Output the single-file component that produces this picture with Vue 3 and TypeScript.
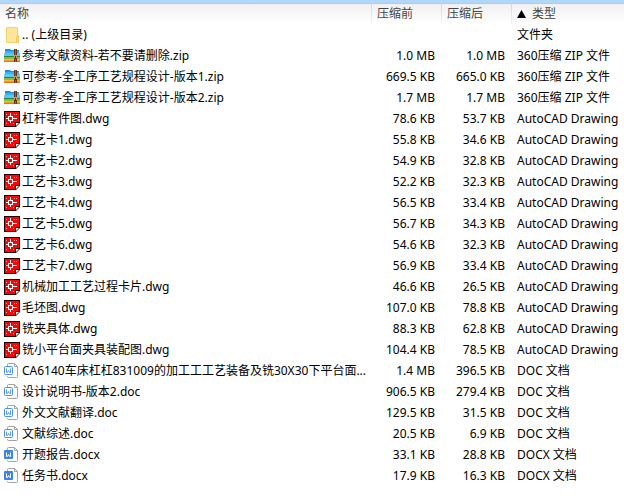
<script setup lang="ts">
type Kind = 'folder' | 'zip' | 'dwg' | 'doc' | 'docx'

interface Entry {
  kind: Kind
  name: string
  before: string
  after: string
}

const typeNames: Record<Kind, string> = {
  folder: '文件夹',
  zip: '360压缩 ZIP 文件',
  dwg: 'AutoCAD Drawing',
  doc: 'DOC 文档',
  docx: 'DOCX 文档',
}

const entries: Entry[] = [
  { kind: 'folder', name: '.. (上级目录)', before: '', after: '' },
  { kind: 'zip', name: '参考文献资料-若不要请删除.zip', before: '1.0 MB', after: '1.0 MB' },
  { kind: 'zip', name: '可参考-全工序工艺规程设计-版本1.zip', before: '669.5 KB', after: '665.0 KB' },
  { kind: 'zip', name: '可参考-全工序工艺规程设计-版本2.zip', before: '1.7 MB', after: '1.7 MB' },
  { kind: 'dwg', name: '杠杆零件图.dwg', before: '78.6 KB', after: '53.7 KB' },
  { kind: 'dwg', name: '工艺卡1.dwg', before: '55.8 KB', after: '34.6 KB' },
  { kind: 'dwg', name: '工艺卡2.dwg', before: '54.9 KB', after: '32.8 KB' },
  { kind: 'dwg', name: '工艺卡3.dwg', before: '52.2 KB', after: '32.3 KB' },
  { kind: 'dwg', name: '工艺卡4.dwg', before: '56.5 KB', after: '33.4 KB' },
  { kind: 'dwg', name: '工艺卡5.dwg', before: '56.7 KB', after: '34.3 KB' },
  { kind: 'dwg', name: '工艺卡6.dwg', before: '54.6 KB', after: '32.3 KB' },
  { kind: 'dwg', name: '工艺卡7.dwg', before: '56.9 KB', after: '33.4 KB' },
  { kind: 'dwg', name: '机械加工工艺过程卡片.dwg', before: '46.6 KB', after: '26.5 KB' },
  { kind: 'dwg', name: '毛坯图.dwg', before: '107.0 KB', after: '78.8 KB' },
  { kind: 'dwg', name: '铣夹具体.dwg', before: '88.3 KB', after: '62.8 KB' },
  { kind: 'dwg', name: '铣小平台面夹具装配图.dwg', before: '104.4 KB', after: '78.5 KB' },
  { kind: 'doc', name: 'CA6140车床杠杠831009的加工工工艺装备及铣30X30下平台面...', before: '1.4 MB', after: '396.5 KB' },
  { kind: 'doc', name: '设计说明书-版本2.doc', before: '906.5 KB', after: '279.4 KB' },
  { kind: 'doc', name: '外文文献翻译.doc', before: '129.5 KB', after: '31.5 KB' },
  { kind: 'doc', name: '文献综述.doc', before: '20.5 KB', after: '6.9 KB' },
  { kind: 'docx', name: '开题报告.docx', before: '33.1 KB', after: '28.8 KB' },
  { kind: 'docx', name: '任务书.docx', before: '17.9 KB', after: '16.3 KB' },
]
</script>

<template>
  <main class="archive">
    <table class="files">
      <colgroup>
        <col />
        <col class="col-size" />
        <col class="col-size" />
        <col class="col-type" />
      </colgroup>
      <thead>
        <tr>
          <th scope="col"><button type="button">名称</button></th>
          <th scope="col"><button type="button">压缩前</button></th>
          <th scope="col"><button type="button">压缩后</button></th>
          <th scope="col" aria-sort="ascending">
            <button type="button">
              <svg class="sort" width="9" height="8" viewBox="0 0 9 8" aria-hidden="true"><path d="M4.5 0L9 8H0z" /></svg>
              类型
            </button>
          </th>
        </tr>
      </thead>
      <tbody>
        <tr v-for="entry in entries" :key="entry.name">
          <td>
            <div class="name">
              <svg v-if="entry.kind === 'folder'" class="icon" viewBox="0 0 16 16" aria-hidden="true">
                <path d="M2.5.5h11v8h1v7h-12z" fill="#ffe599" stroke="#f3d36b" />
                <path d="M12.5 15.5v-6h1v-1h1v7z" fill="#fbdc7c" stroke="#f0cd62" />
              </svg>
              <svg v-else-if="entry.kind === 'zip'" class="icon" viewBox="0 0 16 16" aria-hidden="true">
                <path d="M1 1h5l1 1h8v6H1z" fill="#1f8fd8" />
                <path d="M1 3h14v5H0V5h1z" fill="#3ab1f0" />
                <path d="M0 5h16v3H0z" fill="#62c6f8" />
                <path d="M0 8h16v1H0z" fill="#2f7f3c" />
                <path d="M0 9h16v2H0z" fill="#7cc142" />
                <path d="M0 11h16v3H0z" fill="#fb9420" />
                <path d="M0 11h16v1H0z" fill="#ffb545" />
                <path d="M0 13h16v1H0z" fill="#e67a12" />
                <path d="M10 1h3v13h-3z" fill="#6b3418" />
                <path d="M11 1h1v6h-1zM11 11h1v3h-1z" fill="#94613c" />
                <path d="M10 7h3v3h-3z" fill="#c79a6c" />
                <path d="M11 8h1v3h-1z" fill="#5a2b14" />
              </svg>
              <svg v-else-if="entry.kind === 'dwg'" class="icon" viewBox="0 0 16 16" aria-hidden="true">
                <path d="M0 0h16v12l-4 4H0z" fill="#200000" />
                <path d="M1 1h14v10h-4v4H1z" fill="#fa0505" />
                <rect x="4.5" y="5.5" width="4" height="4" fill="none" stroke="#fff" />
                <path d="M6 2h1v4H6zM6 9h1v3H6zM2 7h3v1H2zM8 7h5v1H8z" fill="#fff" />
                <path d="M10 3h1v1h-1zM12 3h1v1h-1zM2 3h1v1H2zM2 12h1v1H2zM9 12h1v1H9z" fill="#ff9c9c" />
                <path d="M12 15v-3h3z" fill="#fff" />
              </svg>
              <svg v-else class="icon" viewBox="0 0 16 16" aria-hidden="true">
                <path d="M3.5 3V1.5q0-1 1-1h6l3 3v10q0 1-1 1h-8q-1 0-1-1V13" fill="#fff" stroke="#a3a3a3" />
                <path d="M10.5.5v3h3" fill="none" stroke="#a3a3a3" />
                <rect v-if="entry.kind === 'doc'" x="0.5" y="3.5" width="8" height="8" rx="1" fill="#fff" stroke="#4b8ef5" />
                <rect v-else x="0" y="3" width="9" height="9" rx="1" fill="#3c82f0" />
                <path
                  d="M2.5 5.5v4h1l1-2 1 2h1v-4"
                  fill="none"
                  :stroke="entry.kind === 'doc' ? '#5b98f6' : '#fff'"
                />
              </svg>
              <span class="label">{{ entry.name }}</span>
            </div>
          </td>
          <td class="size">{{ entry.before }}</td>
          <td class="size">{{ entry.after }}</td>
          <td class="type">{{ typeNames[entry.kind] }}</td>
        </tr>
      </tbody>
    </table>
  </main>
</template>

<style>
body {
  margin: 0;
  background: #fff;
}
</style>

<style scoped>
.archive {
  border-top: 3px solid #b3d6fb;
  color: #000;
  font: 12px/20px "Noto Sans", "Noto Sans CJK SC", sans-serif;
}

.files {
  width: 100%;
  table-layout: fixed;
  border-collapse: collapse;
}

.col-size {
  width: 70px;
}

.col-type {
  width: 112px;
}

thead tr {
  height: 21px;
  background: linear-gradient(#c3c8ce 1px, #f0f0f0 1px, #fff);
}

th {
  padding: 0;
  background: linear-gradient(#d4d4d4, #f4f4f4) right / 1px 100% no-repeat;
}

th:last-child {
  background: none;
}

th button {
  display: flex;
  align-items: center;
  gap: 6px;
  width: 100%;
  padding: 0 5px;
  border: 0;
  background: none;
  color: #444;
  font: inherit;
  font-weight: 400;
}

.sort {
  fill: #000;
}

tbody tr {
  height: 21px;
}

td {
  padding: 0;
  white-space: nowrap;
}

.name {
  display: flex;
  align-items: center;
  gap: 2px;
  padding-left: 4px;
}

.icon {
  flex: none;
  width: 16px;
  height: 16px;
}

.label {
  overflow: hidden;
  text-overflow: ellipsis;
}

.size {
  padding-right: 7px;
  text-align: right;
}

.type {
  padding-left: 5px;
}
</style>
